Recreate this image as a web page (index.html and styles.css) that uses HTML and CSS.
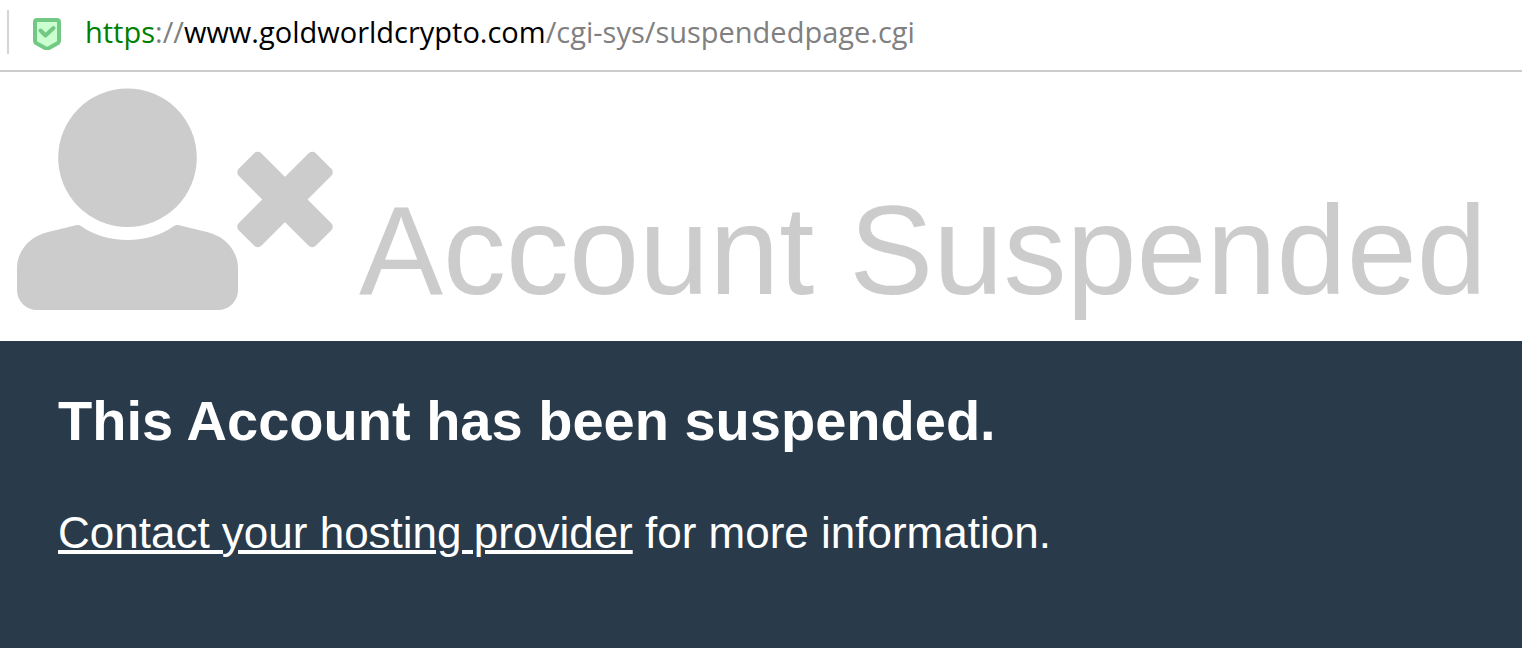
FILE: index.html
```html
<!DOCTYPE html>
<html lang="en">
<head>
  <meta charset="UTF-8" />
  <meta name="viewport" content="width=device-width, initial-scale=1.0"/>
  <title>Account Suspended</title>
  <link rel="stylesheet" href="styles.css">
</head>
<body>
  <div class="address-bar">
    <span class="divider"></span>
    <svg class="shield" viewBox="0 0 28 32" role="img" aria-label="Secure">
      <path d="M4 2h20q2 0 2 2v19q0 1-1 2l-9 5q-2 1-4 0l-9-5q-1-1-1-2V4q0-2 2-2z" fill="#ccffd0" stroke="#72c983" stroke-width="4" stroke-linejoin="round"/>
      <path d="M7.500 12.500l5 5L20.500 10" fill="none" stroke="#72c983" stroke-width="4" stroke-linecap="round" stroke-linejoin="round"/>
    </svg>
    <a class="url" href="#"><span class="scheme">https</span>://<span class="domain">www.goldworldcrypto.com</span>/cgi-sys/suspendedpage.cgi</a>
  </div>

  <header>
    <svg class="user-times" viewBox="0 0 316 222" aria-hidden="true">
      <circle cx="110.500" cy="69.700" r="69.300"/>
      <path d="M0 180C0 163 13 148 31 144L60 137Q62 136.500 64 138C89 156.500 132 156.500 157 138Q159 136.500 161 137L190 144C208 148 221 163 221 180V202A20 20 0 0 1 201 222H20A20 20 0 0 1 0 202Z"/>
      <rect x="213.500" y="95.500" width="109" height="32" rx="5" transform="rotate(45 268 111.500)"/>
      <rect x="213.500" y="95.500" width="109" height="32" rx="5" transform="rotate(-45 268 111.500)"/>
    </svg>
    <h1>Account Suspended</h1>
  </header>

  <main class="info">
    <h2>This Account has been suspended.</h2>
    <p><a href="#">Contact your hosting provider</a> for more information.</p>
  </main>
</body>
</html>
```
FILE: styles.css
```css
* { box-sizing: border-box; margin: 0; padding: 0; }
body {
  display: flex;
  flex-direction: column;
  min-height: 100vh;
  font-family: "Liberation Sans", Arial, sans-serif;
  background: #fff;
  color: #ccc;
}

.address-bar {
  display: flex;
  align-items: center;
  padding: 10px 7px 16px;
  border-bottom: 2px solid #ccc;
}
.divider {
  width: 2px;
  height: 44px;
  background: #d4d4d4;
}
.shield {
  width: 28px;
  height: 32px;
  margin: 4px 24px 0;
}
.url {
  font-family: "Open Sans", "Segoe UI", sans-serif;
  font-size: 29px;
  line-height: 44px;
  color: #808080;
  text-decoration: none;
}
.scheme {
  color: #008000;
}
.domain {
  color: #000;
}

header {
  display: flex;
  align-items: flex-end;
  gap: 26px;
  padding: 16px 17px 31px;
}
.user-times {
  flex: none;
  width: 316px;
  height: 222px;
  fill: #ccc;
}
h1 {
  font-size: 126px;
  font-weight: normal;
  line-height: 118px;
  white-space: nowrap;
}

.info {
  flex: 1;
  padding: 48px 58px;
  background: #293a4a;
  color: #fff;
}
h2 {
  margin-bottom: 48px;
  font-size: 56px;
  line-height: 64px;
}
p {
  font-size: 44px;
  line-height: 64px;
}
p a {
  color: #fff;
  text-decoration-thickness: 4px;
}
```
